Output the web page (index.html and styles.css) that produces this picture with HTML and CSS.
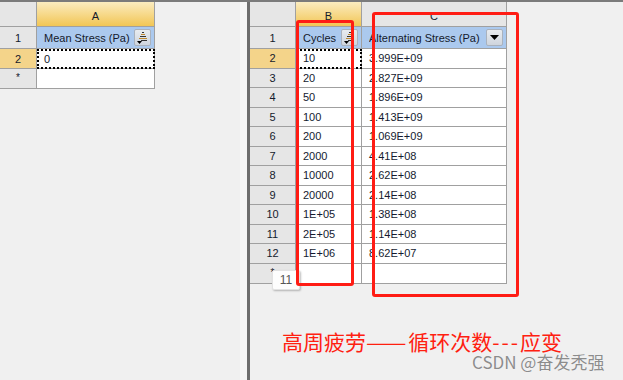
FILE: index.html
```html
<!DOCTYPE html>
<html>
<head>
<meta charset="utf-8">
<link rel="stylesheet" href="styles.css">
</head>
<body>
<div class="app">
  <div class="pane left">
    <div class="sheet sheet-left">
      <div class="c rh corner"></div>
      <div class="c ch sel">A</div>
      <div class="c rh">1</div>
      <div class="c hd"><span class="lbl">Mean Stress (Pa)</span><span class="btn"><svg width="11" height="13" viewBox="0 0 11 13"><rect x="5" y="1" width="2" height="1" fill="#333"/><rect x="4" y="3" width="4" height="1" fill="#c08a30"/><rect x="3" y="5" width="6" height="1" fill="#333"/><rect x="2" y="7" width="8" height="1" fill="#c08a30"/><rect x="4" y="9" width="6" height="1" fill="#333"/><path d="M0 10h5l-2.5 3z" fill="#000"/></svg></span></div>
      <div class="c rh rsel">2</div>
      <div class="c d cur">0</div>
      <div class="c rh star">*</div>
      <div class="c d"></div>
    </div>
  </div>
  <div class="splitter"></div>
  <div class="pane right">
    <div class="sheet sheet-right">
      <div class="c rh corner"></div>
      <div class="c ch sel">B</div>
      <div class="c ch">C</div>

      <div class="c rh">1</div>
      <div class="c hd"><span class="lbl">Cycles</span><span class="btn"><svg width="11" height="13" viewBox="0 0 11 13"><rect x="5" y="1" width="2" height="1" fill="#333"/><rect x="4" y="3" width="4" height="1" fill="#c08a30"/><rect x="3" y="5" width="6" height="1" fill="#333"/><rect x="2" y="7" width="8" height="1" fill="#c08a30"/><rect x="4" y="9" width="6" height="1" fill="#333"/><path d="M0 10h5l-2.5 3z" fill="#000"/></svg></span></div>
      <div class="c hd"><span class="lbl">Alternating Stress (Pa)</span><span class="btn"><svg width="9" height="5" viewBox="0 0 9 5"><path d="M0 0h9l-4.5 5z" fill="#000"/></svg></span></div>

      <div class="c rh rsel">2</div><div class="c d cur">10</div><div class="c d">3.999E+09</div>
      <div class="c rh">3</div><div class="c d">20</div><div class="c d">2.827E+09</div>
      <div class="c rh">4</div><div class="c d">50</div><div class="c d">1.896E+09</div>
      <div class="c rh">5</div><div class="c d">100</div><div class="c d">1.413E+09</div>
      <div class="c rh">6</div><div class="c d">200</div><div class="c d">1.069E+09</div>
      <div class="c rh">7</div><div class="c d">2000</div><div class="c d">4.41E+08</div>
      <div class="c rh">8</div><div class="c d">10000</div><div class="c d">2.62E+08</div>
      <div class="c rh">9</div><div class="c d">20000</div><div class="c d">2.14E+08</div>
      <div class="c rh">10</div><div class="c d">1E+05</div><div class="c d">1.38E+08</div>
      <div class="c rh">11</div><div class="c d">2E+05</div><div class="c d">1.14E+08</div>
      <div class="c rh">12</div><div class="c d">1E+06</div><div class="c d">8.62E+07</div>
      <div class="c rh star">*</div><div class="c d"></div><div class="c d"></div>
    </div>
    <div class="tip">11</div>
    <div class="mark mark-b"></div>
    <div class="mark mark-c"></div>
  </div>
</div>
<div class="note">高周疲劳<span class="dash">——</span>循环次数<span class="hy">---</span>应变</div>
<div class="wm">CSDN @奋发秃强</div>
</body>
</html>
```

FILE: styles.css
```css
html, body {
  margin: 0;
  padding: 0;
  background: #f0f0f0;
  width: 623px;
  height: 380px;
  overflow: hidden;
  font-family: "Liberation Sans", Arial, sans-serif;
  font-size: 11px;
  color: #141a2c;
}

.app {
  display: flex;
  height: 380px;
  border-top: 2px solid #7b7b7b;
  box-sizing: border-box;
}

.pane {
  position: relative;
}

.left {
  width: 240px;
}

.splitter {
  width: 7px;
  background: #f7f7f7;
  border-right: 3px solid #6f6f6f;
}

.right {
  flex: 1;
}

.sheet {
  display: grid;
  background: #f0f0f0;
}

.sheet-left {
  grid-template-columns: 37px 118px;
  grid-template-rows: 25px 22px 20px 20px;
  width: 155px;
}

.sheet-right {
  grid-template-columns: 46px 66px 145px;
  grid-template-rows: 25px 22px repeat(11, 19.5px) 20px;
  width: 257px;
}

.c {
  box-sizing: border-box;
  border-right: 1px solid #a0a0a0;
  border-bottom: 1px solid #a0a0a0;
  display: flex;
  align-items: center;
  white-space: nowrap;
  overflow: hidden;
  position: relative;
}

.rh {
  background: #e6e6e6;
  justify-content: center;
}

.rh.rsel {
  background: #f4d48a;
}

.star {
  font-size: 10px;
  align-items: flex-start;
  padding-top: 3px;
}

.ch {
  background: #e6e6e6;
  justify-content: center;
  padding-top: 3px;
}

.ch.sel {
  background: linear-gradient(#fbecc0, #f2c655);
}

.hd {
  background: #abc9ee;
  padding-left: 7px;
  justify-content: space-between;
  padding-right: 3px;
}

.lbl {
  overflow: hidden;
}

.btn {
  flex: none;
  width: 17px;
  height: 17px;
  box-sizing: border-box;
  border: 1px solid #aab2bd;
  border-radius: 2px;
  background: linear-gradient(#e8ebef, #cfd5dd);
  display: flex;
  align-items: center;
  justify-content: center;
}

.d {
  background: #fff;
  padding-left: 7px;
  color: #141a30;
}

.cur {
  outline: 2px dotted #000;
  outline-offset: -2px;
}

.tip {
  position: absolute;
  left: 22px;
  top: 268px;
  width: 26px;
  height: 18px;
  background: #fdfdfd;
  border: 1px solid #e2e2e2;
  border-radius: 2px;
  box-shadow: 1px 1px 2px rgba(0,0,0,0.25);
  color: #555;
  font-size: 12px;
  display: flex;
  align-items: center;
  justify-content: center;
}

.mark {
  position: absolute;
  border: 3px solid #ff1c14;
  border-radius: 3px;
  box-sizing: border-box;
}

.mark-b {
  left: 46px;
  top: 18px;
  width: 58px;
  height: 266px;
}

.mark-c {
  left: 122px;
  top: 10px;
  width: 147px;
  height: 285px;
}

.note {
  position: absolute;
  left: 282px;
  top: 331px;
  font-family: "Noto Sans CJK SC", "Liberation Sans", sans-serif;
  font-size: 21px;
  line-height: 21px;
  color: #ff2010;
  white-space: nowrap;
}

.dash {
  display: inline-block;
  transform: scaleX(1.15);
  transform-origin: left center;
  margin-right: 7px;
}

.hy {
  letter-spacing: 2px;
}

.wm {
  position: absolute;
  left: 472px;
  top: 353px;
  font-family: "Noto Sans CJK SC", "Liberation Sans", sans-serif;
  font-size: 17px;
  line-height: 17px;
  color: #8c8c8c;
  white-space: nowrap;
  text-shadow: 0 0 1px #fff;
}
```
